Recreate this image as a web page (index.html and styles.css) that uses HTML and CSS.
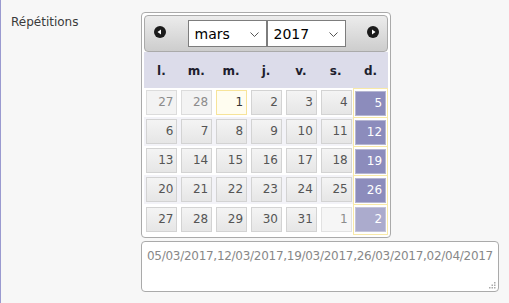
FILE: index.html
```html
<!DOCTYPE html>
<html lang="fr">
<head>
<meta charset="utf-8">
<title>Répétitions</title>
<link rel="stylesheet" href="styles.css">
</head>
<body>
<div class="form">
  <div class="label">Répétitions</div>
  <div class="field">
    <div class="cal">
      <div class="cal-head">
        <span class="nav"><svg width="12" height="12" viewBox="0 0 12 12"><circle cx="6" cy="6" r="6" fill="#1b1b1b"/><path d="M3.5 6 L7 3.5 L7 8.5 Z" fill="#fff"/></svg></span>
        <div class="selects">
          <div class="sel">mars<svg class="chev" width="9" height="5" viewBox="0 0 9 5"><path d="M0.5 0.5 L4.5 4.5 L8.5 0.5" fill="none" stroke="#555" stroke-width="1"/></svg></div>
          <div class="sel">2017<svg class="chev" width="9" height="5" viewBox="0 0 9 5"><path d="M0.5 0.5 L4.5 4.5 L8.5 0.5" fill="none" stroke="#555" stroke-width="1"/></svg></div>
        </div>
        <span class="nav"><svg width="12" height="12" viewBox="0 0 12 12"><circle cx="6" cy="6" r="6" fill="#1b1b1b"/><path d="M8.5 6 L5 3.5 L5 8.5 Z" fill="#fff"/></svg></span>
      </div>
      <div class="dow">
        <span>l.</span><span>m.</span><span>m.</span><span>j.</span><span>v.</span><span>s.</span><span>d.</span>
      </div>
      <div class="weeks">
        <div class="week">
          <div class="td"><span class="day other">27</span></div>
          <div class="td"><span class="day other">28</span></div>
          <div class="td"><span class="day today">1</span></div>
          <div class="td"><span class="day">2</span></div>
          <div class="td"><span class="day">3</span></div>
          <div class="td"><span class="day">4</span></div>
          <div class="td sun first"><span class="day sel-day">5</span></div>
        </div>
        <div class="week alt">
          <div class="td"><span class="day">6</span></div>
          <div class="td"><span class="day">7</span></div>
          <div class="td"><span class="day">8</span></div>
          <div class="td"><span class="day">9</span></div>
          <div class="td"><span class="day">10</span></div>
          <div class="td"><span class="day">11</span></div>
          <div class="td sun"><span class="day sel-day">12</span></div>
        </div>
        <div class="week">
          <div class="td"><span class="day">13</span></div>
          <div class="td"><span class="day">14</span></div>
          <div class="td"><span class="day">15</span></div>
          <div class="td"><span class="day">16</span></div>
          <div class="td"><span class="day">17</span></div>
          <div class="td"><span class="day">18</span></div>
          <div class="td sun"><span class="day sel-day">19</span></div>
        </div>
        <div class="week alt">
          <div class="td"><span class="day">20</span></div>
          <div class="td"><span class="day">21</span></div>
          <div class="td"><span class="day">22</span></div>
          <div class="td"><span class="day">23</span></div>
          <div class="td"><span class="day">24</span></div>
          <div class="td"><span class="day">25</span></div>
          <div class="td sun"><span class="day sel-day">26</span></div>
        </div>
        <div class="week">
          <div class="td"><span class="day">27</span></div>
          <div class="td"><span class="day">28</span></div>
          <div class="td"><span class="day">29</span></div>
          <div class="td"><span class="day">30</span></div>
          <div class="td"><span class="day">31</span></div>
          <div class="td"><span class="day other next">1</span></div>
          <div class="td sun last"><span class="day sel-day other-sel">2</span></div>
        </div>
      </div>
    </div>
    <div class="ta">05/03/2017,12/03/2017,19/03/2017,26/03/2017,02/04/2017<svg class="grip" width="7" height="7" viewBox="0 0 7 7"><g fill="#aaa"><rect x="5" y="0" width="1.5" height="1.5"/><rect x="2.5" y="2.5" width="1.5" height="1.5"/><rect x="5" y="2.5" width="1.5" height="1.5"/><rect x="0" y="5" width="1.5" height="1.5"/><rect x="2.5" y="5" width="1.5" height="1.5"/><rect x="5" y="5" width="1.5" height="1.5"/></g></svg></div>
  </div>
</div>
</body>
</html>
```

FILE: styles.css
```css
html, body {
  margin: 0;
  padding: 0;
  background: #f7f7f7;
  font-family: "DejaVu Sans", Verdana, sans-serif;
}
.form {
  display: flex;
  border-left: 1px solid #9a9ad0;
  height: 303px;
  box-sizing: border-box;
}
.label {
  width: 130px;
  padding: 15px 0 0 10px;
  font-size: 12px;
  line-height: 14px;
  color: #3a3a3a;
}
.field {
  padding-top: 12px;
}
.cal {
  width: 244px;
  border: 1px solid #aaa;
  border-radius: 4px;
  padding: 2px 2px 4px 2px;
  background: #fff;
}
.cal-head {
  height: 37px;
  box-sizing: border-box;
  border: 1px solid #aaa;
  border-radius: 4px;
  background: linear-gradient(#ececec, #cdcdcd);
  display: flex;
  align-items: center;
  padding: 0 8px 0 9px;
}
.nav {
  display: flex;
  width: 12px;
  height: 12px;
  margin-bottom: 4px;
}
.selects {
  flex: 1;
  display: flex;
  justify-content: center;
}
.sel {
  width: 79px;
  height: 27px;
  box-sizing: border-box;
  border: 1px solid #7d7d7d;
  background: #fff;
  display: flex;
  align-items: center;
  justify-content: space-between;
  padding: 0 7px 0 6px;
  font-size: 14px;
  color: #000;
}
.sel + .sel {
  margin-left: 0;
}
.chev {
  margin-top: 1px;
}
.dow {
  height: 36px;
  background: #dcdcea;
  display: grid;
  grid-template-columns: repeat(7, 1fr);
  align-items: center;
  font-weight: bold;
  font-size: 12px;
  color: #1e1e2e;
  text-align: center;
}
.dow span {
  padding-top: 1px;
}
.weeks {
  display: flex;
  flex-direction: column;
}
.week {
  display: grid;
  grid-template-columns: repeat(7, 1fr);
  height: 29px;
}
.week.alt {
  background: #f3f3f8;
}
.td {
  display: flex;
  align-items: center;
  justify-content: center;
  padding-left: 1px;
}
.td.sun {
  background: #fff;
  border: 1px solid #f8e9a8;
  border-bottom: none;
  padding-left: 0;
}
.td.sun.last {
  border-bottom: 1px solid #f8e9a8;
  height: 29px;
}
.day {
  width: 31px;
  height: 25px;
  box-sizing: border-box;
  border: 1px solid #d3d3d3;
  background: linear-gradient(#f4f4f4, #e6e6e6);
  color: #555;
  font-size: 12px;
  line-height: 23px;
  text-align: right;
  padding-right: 3px;
}
.day.other {
  background: #f3f3f3;
  border-color: #dcdcdc;
  color: #8c8c8c;
}
.day.other.next {
  background: #f6f6f6;
  border-color: #e2e2e2;
}
.day.today {
  background: #fffdf0;
  border-color: #f7e49a;
  color: #363636;
}
.day.sel-day {
  background: #8c8cbc;
  border-color: #b6b6d2;
  color: #fff;
}
.day.sel-day.other-sel {
  background: #ababcd;
  border-color: #c4c4da;
}
.ta {
  position: relative;
  margin-top: 3px;
  width: 358px;
  height: 51px;
  box-sizing: border-box;
  border: 1px solid #aaa;
  border-radius: 4px;
  background: #fff;
  padding: 7px 5px;
  font-size: 12px;
  line-height: 14px;
  letter-spacing: -0.28px;
  color: #888;
  white-space: nowrap;
}
.grip {
  position: absolute;
  right: 2px;
  bottom: 2px;
}
```
